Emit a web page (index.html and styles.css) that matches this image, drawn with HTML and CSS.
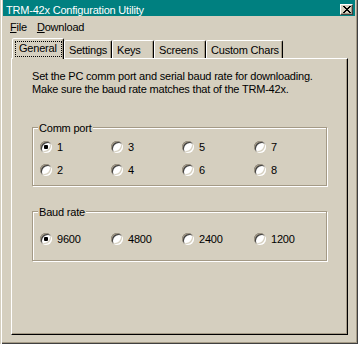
FILE: index.html
```html
<!DOCTYPE html>
<html lang="en">
<head>
<meta charset="utf-8">
<title>TRM-42x Configuration Utility</title>
<link rel="stylesheet" href="styles.css">
</head>
<body>
<div class="window">
  <div class="titlebar">
    <span class="title">TRM-42x Configuration Utility</span>
    <span class="close" role="button" aria-label="Close">
      <svg width="8" height="7" viewBox="0 0 8 7" shape-rendering="crispEdges"><path fill="#000" d="M0 0h2v1h-2zM6 0h2v1h-2zM1 1h2v1h-2zM5 1h2v1h-2zM2 2h4v1h-4zM3 3h2v1h-2zM2 4h4v1h-4zM1 5h2v1h-2zM5 5h2v1h-2zM0 6h2v1h-2zM6 6h2v1h-2z"/></svg>
    </span>
  </div>
  <div class="menubar">
    <span class="menu-item"><u>F</u>ile</span>
    <span class="menu-item"><u>D</u>ownload</span>
  </div>
  <div class="tabs">
    <div class="tab tab-selected tab-general"><span class="focus">General</span></div>
    <div class="tab tab-settings">Settings</div>
    <div class="tab tab-keys">Keys</div>
    <div class="tab tab-screens">Screens</div>
    <div class="tab tab-custom">Custom Chars</div>
  </div>
  <div class="panel">
    <p class="intro">Set the PC comm port and serial baud rate for downloading.<br>Make sure the baud rate matches that of the TRM-42x.</p>
    <fieldset class="group group-comm">
      <legend>Comm port</legend>
      <div class="options">
        <span class="option"><span class="radio checked"></span>1</span>
        <span class="option"><span class="radio"></span>2</span>
        <span class="option"><span class="radio"></span>3</span>
        <span class="option"><span class="radio"></span>4</span>
        <span class="option"><span class="radio"></span>5</span>
        <span class="option"><span class="radio"></span>6</span>
        <span class="option"><span class="radio"></span>7</span>
        <span class="option"><span class="radio"></span>8</span>
      </div>
    </fieldset>
    <fieldset class="group group-baud">
      <legend>Baud rate</legend>
      <div class="options options-single">
        <span class="option"><span class="radio checked"></span>9600</span>
        <span class="option"><span class="radio"></span>4800</span>
        <span class="option"><span class="radio"></span>2400</span>
        <span class="option"><span class="radio"></span>1200</span>
      </div>
    </fieldset>
  </div>
</div>
</body>
</html>
```
FILE: styles.css
```css
html, body {
  margin: 0;
  padding: 0;
}

body {
  background: #d5cfbf;
  font-family: "Liberation Sans", Arial, sans-serif;
  font-size: 11px;
  letter-spacing: -0.2px;
  color: #000;
}

.window {
  box-sizing: border-box;
  width: 358px;
  height: 344px;
  padding: 0 3px 2px 3px;
  display: flex;
  flex-direction: column;
  background: #d5cfbf;
  box-shadow:
    inset 1px 0 0 #d5cfbf,
    inset 2px 0 0 #ffffff,
    inset -1px -1px 0 #404040,
    inset -2px -2px 0 #a49a86;
}

/* Title bar */
.titlebar {
  height: 16px;
  flex: none;
  display: flex;
  align-items: flex-start;
  padding: 0 2px 0 3px;
  background: #008080;
  color: #fff;
}

.title {
  margin-top: 4px;
  line-height: 12px;
  white-space: nowrap;
}

.close {
  box-sizing: border-box;
  margin: 4px 0 0 auto;
  width: 13px;
  height: 11px;
  display: flex;
  align-items: center;
  justify-content: center;
  background: #d5cfbf;
  border: 1px solid;
  border-color: #ffffff #404040 #404040 #ffffff;
  box-shadow: inset -1px -1px 0 #a49a86;
}

.close svg {
  display: block;
}

/* Menu bar */
.menubar {
  height: 22px;
  flex: none;
  box-sizing: border-box;
  padding: 5px 0 0 2px;
  display: flex;
  line-height: 13px;
}

.menu-item {
  padding: 0 5px;
}

.menu-item u {
  text-decoration-thickness: 1px;
  text-underline-offset: 1px;
}

/* Tabs */
.tabs {
  height: 20px;
  flex: none;
  display: flex;
  align-items: flex-end;
  padding-left: 9px;
  position: relative;
  z-index: 1;
}

.tab {
  box-sizing: border-box;
  height: 18px;
  padding: 3px 0 0 4px;
  line-height: 13px;
  white-space: nowrap;
  background: #d5cfbf;
  border: 1px solid;
  border-bottom: none;
  border-color: #ffffff #000000 transparent #ffffff;
  border-radius: 2px 2px 0 0;
  box-shadow: inset -1px 0 0 #a49a86;
}

.tab-selected {
  height: 21px;
  margin-bottom: -1px;
  padding: 3px 0 0 3px;
}

.focus {
  display: inline-block;
  padding: 0 4px 1px 3px;
  line-height: 13px;
  outline: 1px dotted #000;
}

.tab-general { width: 52px; }
.tab-settings { width: 48px; }
.tab-keys { width: 42px; }
.tab-screens { width: 52px; }
.tab-custom { width: 77px; }

/* Panel */
.panel {
  flex: 1;
  margin: 0 7px 7px 8px;
  padding: 11px 0 0 20px;
  border: 1px solid;
  border-color: #ffffff #000000 #000000 #ffffff;
  box-shadow: inset -1px -1px 0 #a49a86;
}

.intro {
  margin: 0;
  line-height: 13px;
  white-space: nowrap;
}

/* Group boxes */
.group {
  box-sizing: border-box;
  width: 295px;
  margin: 24px 0 0 0;
  min-width: 0;
  border: 1px solid #a49a86;
  box-shadow: inset 1px 1px 0 #ffffff, 1px 1px 0 #ffffff;
}

.group-comm {
  padding: 6px 0 9px 7px;
}

.group-baud {
  margin-top: 18px;
  padding: 14px 0 15px 7px;
}

.group legend {
  margin-left: -2px;
  padding: 2px 1px 0 1px;
  line-height: 13px;
  background: #d5cfbf;
}

.options {
  display: grid;
  grid-template-columns: 71px 71px 72px 1fr;
  grid-template-rows: 12px 12px;
  grid-auto-flow: column;
  row-gap: 11px;
}

.options-single {
  grid-template-rows: 12px;
}

.option {
  display: flex;
  align-items: center;
  gap: 5px;
  line-height: 12px;
  height: 12px;
}

.radio {
  position: relative;
  flex: none;
  width: 12px;
  height: 12px;
  border-radius: 50%;
  background: #ffffff;
  box-shadow:
    inset 1px 1px 0 #a49a86,
    inset -1px -1px 0 #ffffff,
    inset 2px 2px 0 #404040,
    inset -2px -2px 0 #d5cfbf;
}

.radio.checked::after {
  content: "";
  position: absolute;
  left: 4px;
  top: 4px;
  width: 4px;
  height: 4px;
  border-radius: 1px;
  background: #000;
}
```
